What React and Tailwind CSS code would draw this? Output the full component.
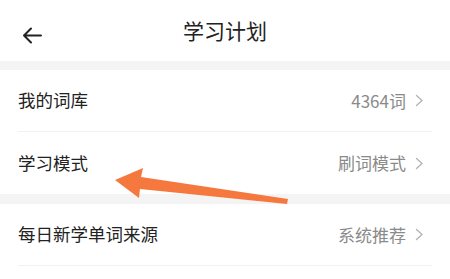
import React from 'react';

const font = { fontFamily: '"Noto Sans CJK SC", "Noto Sans", sans-serif' };

function Chevron() {
  return (
    <svg width="9" height="13" viewBox="0 0 9 13" className="ml-[9px]" fill="none">
      <path d="M1.5 1.5 L7 6.5 L1.5 11.5" stroke="#b4b4b4" strokeWidth="1.4" strokeLinecap="round" strokeLinejoin="round" />
    </svg>
  );
}

function Row({ label, value, divider }) {
  return (
    <div className="px-[18px]">
      <div className={`flex h-[62px] items-center justify-between ${divider ? 'border-b border-[#f1f1f1]' : ''}`}>
        <span className="text-[17.5px] text-[#222]">{label}</span>
        <span className="flex items-center pr-[8px] text-[17px] text-[#8a8a8a]">
          {value}
          <Chevron />
        </span>
      </div>
    </div>
  );
}

export default function App() {
  return (
    <div className="relative h-[279px] w-[450px] overflow-hidden bg-white" style={font}>
      <header className="relative flex h-[61px] items-center justify-center">
        <svg className="absolute left-[22px] top-[27px]" width="20" height="17" viewBox="0 0 20 17" fill="none">
          <path d="M19 8.5 H2 M9 1.5 L2 8.5 L9 15.5" stroke="#222" strokeWidth="2" strokeLinecap="round" strokeLinejoin="round" />
        </svg>
        <h1 className="text-[21px] text-[#222]">学习计划</h1>
      </header>
      <div className="h-[9px] bg-[#f4f4f4]" />
      <Row label="我的词库" value="4364词" divider />
      <Row label="学习模式" value="刷词模式" />
      <div className="h-[10px] bg-[#f4f4f4]" />
      <Row label="每日新学单词来源" value="系统推荐" divider />

      <svg className="pointer-events-none absolute left-0 top-0" width="450" height="279" viewBox="0 0 450 279">
        <polygon
          points="115,180 143,168 141,177 288,199 287,204 140,189 139,198"
          fill="#f5793f"
        />
      </svg>
    </div>
  );
}
